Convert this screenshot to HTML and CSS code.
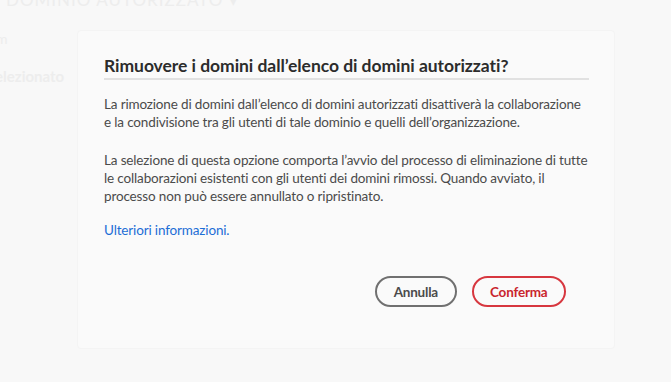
FILE: index.html
```html
<!DOCTYPE html>
<html lang="it">
<head>
    <meta charset="UTF-8">
    <meta name="viewport" content="width=device-width, initial-scale=1.0">
    <title>Rimuovere i domini</title>
    <link rel="stylesheet" href="styles.css">
</head>
<body>
    <div class="page">
        <div class="page-title">Dominio autorizzato &#9662;</div>
        <div class="page-item">m</div>
        <div class="page-item strong">elezionato</div>
    </div>

    <div class="dialog">
        <h2 class="dialog-title">Rimuovere i domini dall’elenco di domini autorizzati?</h2>
        <div class="dialog-body">
            <p>La rimozione di domini dall’elenco di domini autorizzati disattiverà la collaborazione e la condivisione tra gli utenti di tale dominio e quelli dell’organizzazione.</p>
            <p>La selezione di questa opzione comporta l’avvio del processo di eliminazione di tutte le collaborazioni esistenti con gli utenti dei domini rimossi. Quando avviato, il processo non può essere annullato o ripristinato.</p>
            <p class="more"><a href="#" class="link">Ulteriori informazioni.</a></p>
        </div>
        <div class="dialog-buttons">
            <button class="btn btn-secondary">Annulla</button>
            <button class="btn btn-warning">Conferma</button>
        </div>
    </div>
</body>
</html>
```

FILE: styles.css
```css
* {
    box-sizing: border-box;
    font-family: Lato, "Liberation Sans", sans-serif;
}

body {
    margin: 0;
    width: 671px;
    height: 382px;
    background-color: #f8f8f8;
    overflow: hidden;
    position: relative;
}

/* pagina dietro al dialogo, quasi invisibile */
.page {
    color: #ededed;
    font-size: 14px;
}

.page-title {
    margin-top: -11px;
    padding-left: 6px;
    font-size: 17px;
    text-transform: uppercase;
    letter-spacing: 1px;
}

.page-item {
    margin-left: -4px;
    padding-top: 20px;
}

.page-item.strong {
    margin-left: -5px;
    font-weight: 700;
    font-size: 15px;
}

.dialog {
    position: absolute;
    left: 77px;
    top: 30px;
    width: 538px;
    height: 319px;
    background-color: #fafafa;
    border: 1px solid #f4f4f4;
    border-radius: 4px;
    padding: 23px 25px 0 26px;
    display: flex;
    flex-direction: column;
}

.dialog-title {
    margin: 0;
    font-size: 17.5px;
    letter-spacing: -0.05px;
    font-weight: 700;
    color: #2c2c2c;
    border-bottom: 2px solid #e1e1e1;
    line-height: 24px;
}

.dialog-body {
    margin-top: 15px;
    font-size: 13.5px;
    letter-spacing: -0.15px;
    line-height: 18px;
    color: #4b4b4b;
}

.dialog-body p {
    margin: 0 0 20px 0;
}

.dialog-body p.more {
    margin-top: -4px;
    margin-bottom: 0;
}

.link {
    color: #1d6ed6;
    text-decoration: none;
}

.dialog-buttons {
    display: flex;
    justify-content: flex-end;
    gap: 15px;
    margin-top: 37px;
    padding-right: 23px;
}

.btn {
    height: 31px;
    padding: 0 16.5px;
    border-radius: 16px;
    background-color: transparent;
    font-size: 13.5px;
    letter-spacing: -0.2px;
    font-weight: 700;
    cursor: pointer;
}

.btn-secondary {
    border: 2px solid #707070;
    color: #4b4b4b;
}

.btn-warning {
    border: 2px solid #d7373f;
    color: #c9252d;
}
```
